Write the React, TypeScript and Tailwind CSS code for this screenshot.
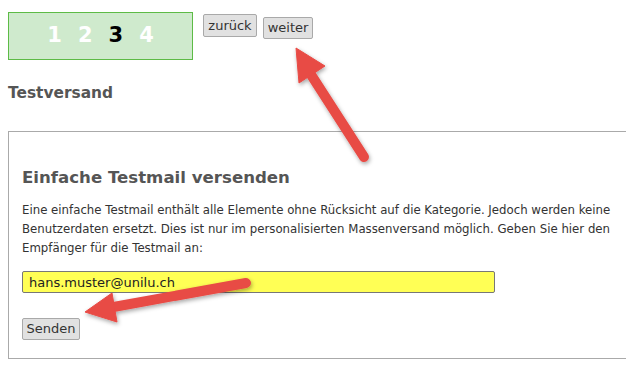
import React from "react";

const Arrows: React.FC = () => (
  <svg
    className="absolute inset-0 pointer-events-none"
    width="626"
    height="372"
    viewBox="0 0 626 372"
  >
    <defs>
      <filter id="shadow" x="-20%" y="-20%" width="140%" height="140%">
        <feDropShadow dx="1" dy="2" stdDeviation="2" floodColor="#000" floodOpacity="0.35" />
      </filter>
    </defs>
    <g filter="url(#shadow)" fill="#e84b45" stroke="#e84b45">
      <line x1="364" y1="157" x2="308" y2="70" strokeWidth="10" strokeLinecap="round" />
      <polygon points="296,48 325,66 299,83" strokeWidth="1" strokeLinejoin="round" />
    </g>
    <g filter="url(#shadow)" fill="#e84b45" stroke="#e84b45">
      <line x1="246" y1="283" x2="108" y2="308" strokeWidth="10" strokeLinecap="round" />
      <polygon points="85,312 112,293 117,322" strokeWidth="1" strokeLinejoin="round" />
    </g>
  </svg>
);

const App: React.FC = () => {
  return (
    <div className="relative w-[626px] h-[372px] overflow-hidden bg-white font-['DejaVu_Sans',sans-serif] text-[#333]">
      <div className="flex items-start pl-2 pt-3">
        <div className="w-[185px] h-[48px] border border-[#5dbb46] bg-[#cfeacd] flex items-center justify-center text-[21px] font-bold text-white">
          <span className="mx-[8px]">1</span>
          <span className="mx-[8px]">2</span>
          <span className="mx-[8px] text-black">3</span>
          <span className="mx-[8px]">4</span>
        </div>
        <button className="ml-[10px] mt-[2px] w-[54px] h-[23px] border border-[#a9a9a9] bg-[#e1e1e1] rounded-[2px] text-[13px] text-[#333]">
          zurück
        </button>
        <button className="ml-[6px] mt-[5px] w-[50px] h-[22px] border border-[#a9a9a9] bg-[#e1e1e1] rounded-[2px] text-[13px] text-[#333]">
          weiter
        </button>
      </div>

      <h2 className="ml-2 mt-[23px] h-[20px] leading-[20px] text-[15.4px] font-bold text-[#555]">
        Testversand
      </h2>

      <div className="ml-2 mt-[28px] w-[640px] h-[228px] border border-[#aaaaaa] pl-[13px] pt-[35px]">
        <h3 className="h-[22px] leading-[22px] text-[16.6px] font-bold text-[#555]">
          Einfache Testmail versenden
        </h3>
        <p className="mt-[12px] text-[11.75px] leading-[19px] text-[#333]">
          Eine einfache Testmail enthält alle Elemente ohne Rücksicht auf die Kategorie. Jedoch werden keine
          <br />
          Benutzerdaten ersetzt. Dies ist nur im personalisierten Massenversand möglich. Geben Sie hier den
          <br />
          Empfänger für die Testmail an:
        </p>
        <input
          readOnly
          value="hans.muster@unilu.ch"
          className="block mt-[13px] w-[473px] h-[22px] border border-[#777] rounded-[2px] bg-[#ffff55] px-[6px] text-[13px] text-[#222] outline-none"
        />
        <button className="block mt-[25px] w-[58px] h-[22px] border border-[#a9a9a9] bg-[#e1e1e1] rounded-[2px] text-[13px] text-[#333]">
          Senden
        </button>
      </div>

      <Arrows />
    </div>
  );
};

export default App;
